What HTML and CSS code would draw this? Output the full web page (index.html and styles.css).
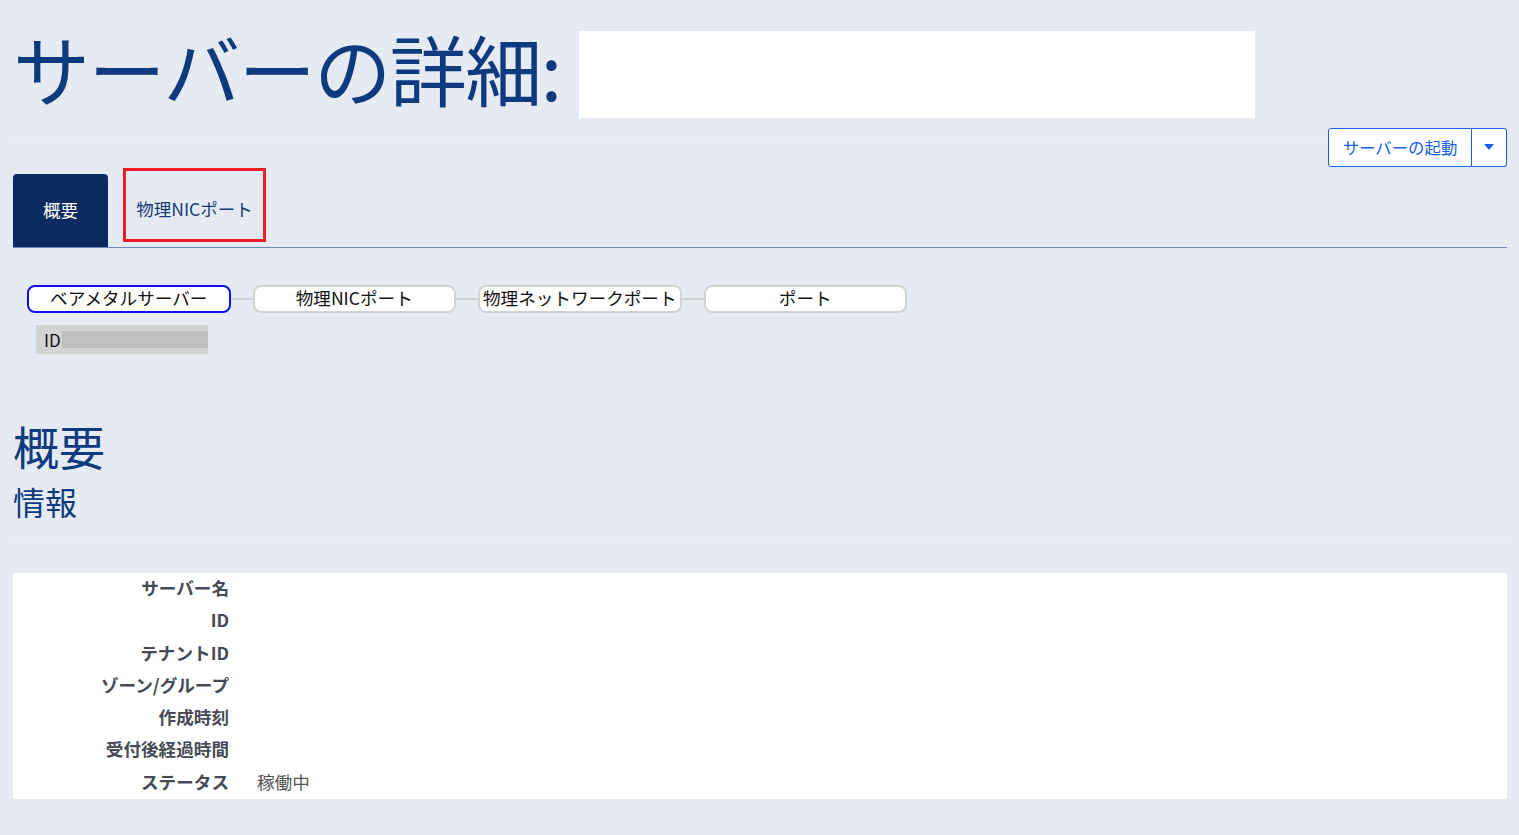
FILE: index.html
```html
<!DOCTYPE html>
<html lang="ja">
<head>
<meta charset="utf-8">
<title>サーバーの詳細</title>
<link rel="stylesheet" href="styles.css">
</head>
<body>
<div class="page">
  <header class="title-row">
    <h1 class="title">サーバーの詳細:</h1>
    <div class="title-name"></div>
  </header>
  <hr class="rule">
  <div class="actions">
    <div class="btn-group">
      <button class="btn-main">サーバーの起動</button>
      <button class="btn-caret"><span class="caret"></span></button>
    </div>
  </div>
  <nav class="tabs">
    <div class="tab active">概要</div>
    <div class="tab highlight">物理NICポート</div>
  </nav>
  <div class="steps">
    <div class="step current">ベアメタルサーバー</div>
    <div class="link"></div>
    <div class="step">物理NICポート</div>
    <div class="link"></div>
    <div class="step">物理ネットワークポート</div>
    <div class="link"></div>
    <div class="step">ポート</div>
  </div>
  <div class="idbox"><span class="idlabel">ID</span><span class="idval"></span></div>
  <h2 class="h-section">概要</h2>
  <h3 class="h-sub">情報</h3>
  <hr class="rule rule2">
  <dl class="info">
    <dt>サーバー名</dt><dd></dd>
    <dt>ID</dt><dd></dd>
    <dt>テナントID</dt><dd></dd>
    <dt>ゾーン/グループ</dt><dd></dd>
    <dt>作成時刻</dt><dd></dd>
    <dt>受付後経過時間</dt><dd></dd>
    <dt>ステータス</dt><dd>稼働中</dd>
  </dl>
</div>
</body>
</html>
```
FILE: styles.css
```css
html, body {
  margin: 0;
  padding: 0;
  background: #e6eaf3;
  font-family: "Noto Sans CJK JP", "Noto Sans", "Liberation Sans", sans-serif;
  color: #222;
}
.page {
  padding: 0 12px 0 13px;
}
.title-row {
  display: flex;
  align-items: flex-start;
  padding-top: 31px;
  height: 87px;
}
.title {
  margin: 0;
  font-size: 77px;
  font-weight: 400;
  line-height: 87px;
  color: #0e3a7f;
  letter-spacing: -1.5px;
  margin-right: 18px;
  position: relative;
  top: -7px;
}
.title-name {
  width: 676px;
  height: 87px;
  background: #fff;
}
.rule {
  border: 0;
  border-top: 1px solid #eef0ee;
  margin: 23px 0 0 0;
}
.actions {
  display: flex;
  justify-content: flex-end;
  margin-top: -14px;
}
.btn-group {
  display: flex;
  height: 39px;
}
.btn-group button {
  background: #fff;
  border: 1px solid #1661e8;
  color: #1661e8;
  font-family: inherit;
  font-size: 16.4px;
  padding: 0 0 2px 0;
  cursor: pointer;
}
.btn-main {
  width: 144px;
  border-radius: 3px 0 0 3px;
}
.btn-caret {
  width: 35px;
  border-left-width: 0 !important;
  border-radius: 0 3px 3px 0;
  display: flex;
  align-items: center;
  justify-content: center;
}
.caret {
  width: 0;
  height: 0;
  border-left: 5px solid transparent;
  border-right: 5px solid transparent;
  border-top: 6px solid #1661e8;
}
.tabs {
  display: flex;
  align-items: flex-end;
  margin-top: 7px;
  border-bottom: 1px solid #6f88b8;
  height: 73px;
}
.tab {
  font-size: 17.5px;
  height: 73px;
  display: flex;
  align-items: center;
  justify-content: center;
  box-sizing: border-box;
  padding-bottom: 3px;
}
.tab.active {
  width: 95px;
  background: #0a2a60;
  color: #fff;
  border-radius: 4px 4px 0 0;
}
.tab.highlight {
  margin-left: 15px;
  width: 143px;
  height: 74px;
  align-self: flex-start;
  margin-top: -6px;
  border: 3px solid #ee1c25;
  color: #163a73;
  padding-top: 6px;
  padding-bottom: 0;
}
.steps {
  display: flex;
  align-items: center;
  margin-top: 37px;
  margin-left: 14px;
}
.step {
  width: 203.5px;
  height: 28px;
  box-sizing: border-box;
  border: 2px solid #d3d3d3;
  border-radius: 8px;
  background: #fff;
  font-size: 17.6px;
  display: flex;
  align-items: center;
  justify-content: center;
  color: #111;
  white-space: nowrap;
  padding-bottom: 3px;
}
.step.current {
  border-color: #1010f0;
}
.link {
  width: 22px;
  height: 2px;
  background: #d3d3d3;
}
.idbox {
  display: flex;
  align-items: center;
  margin: 12px 0 0 23px;
  width: 172px;
  height: 29px;
  background: #d3d3d3;
  padding-left: 8px;
  box-sizing: border-box;
}
.idlabel {
  font-size: 17px;
  color: #111;
}
.idval {
  flex: 1;
  height: 17px;
  background: #c0c0c0;
  margin-left: 1px;
}
.h-section {
  margin: 63px 0 0 0;
  font-size: 46px;
  font-weight: 400;
  line-height: 56px;
  color: #0e3a7f;
}
.h-sub {
  margin: 6px 0 0 0;
  font-size: 32px;
  font-weight: 400;
  line-height: 44px;
  color: #0e3a7f;
}
.rule2 {
  margin-top: 17px;
}
.info {
  margin: 32px 0 0 0;
  background: #fff;
  display: grid;
  grid-template-columns: 216px 1fr;
  column-gap: 28px;
  padding: 0;
  font-size: 17.6px;
  line-height: 30.3px;
}
.info dt, .info dd {
  padding-bottom: 2px;
}
.info dt {
  text-align: right;
  font-weight: 700;
  color: #474a55;
}
.info dd {
  margin: 0;
  color: #555;
}
```
